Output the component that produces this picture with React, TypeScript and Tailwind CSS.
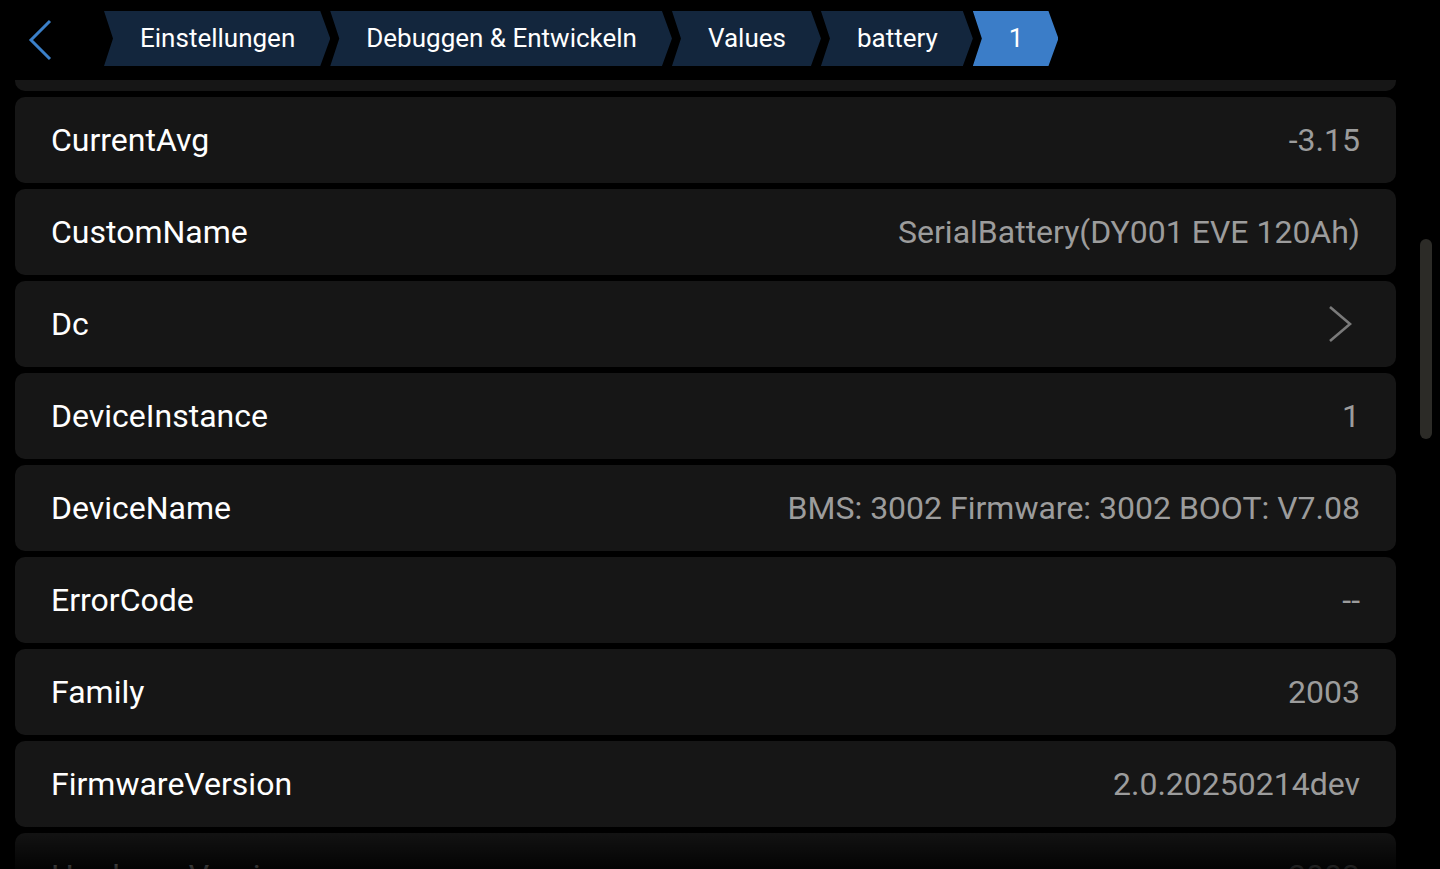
import { ReactNode } from "react";

const crumbs = ["Einstellungen", "Debuggen & Entwickeln", "Values", "battery", "1"];

const rows: { label: string; value?: string; chevron?: boolean }[] = [
  { label: "Current", value: "-3.15" },
  { label: "CurrentAvg", value: "-3.15" },
  { label: "CustomName", value: "SerialBattery(DY001 EVE 120Ah)" },
  { label: "Dc", chevron: true },
  { label: "DeviceInstance", value: "1" },
  { label: "DeviceName", value: "BMS: 3002 Firmware: 3002 BOOT: V7.08" },
  { label: "ErrorCode", value: "--" },
  { label: "Family", value: "2003" },
  { label: "FirmwareVersion", value: "2.0.20250214dev" },
  { label: "HardwareVersion", value: "2003" },
];

function Crumb({ children, active }: { children: ReactNode; active?: boolean }) {
  return (
    <div
      className={`h-[55px] flex items-center pl-[36px] pr-[35px] text-[26px] text-white ${
        active ? "bg-[#3b7dc8]" : "bg-[#13263d]"
      } [clip-path:polygon(0_0,calc(100%-10px)_0,100%_50%,calc(100%-10px)_100%,0_100%,9px_50%)]`}
    >
      {children}
    </div>
  );
}

function Row({ label, value, chevron }: { label: string; value?: string; chevron?: boolean }) {
  return (
    <div className="h-[86px] shrink-0 rounded-[10px] bg-[#161616] flex items-center justify-between pl-[36px] pr-[36px]">
      <span className="text-[32px] text-white">{label}</span>
      {chevron ? (
        <svg width="26" height="42" viewBox="0 0 26 42" className="mr-[6px]">
          <path d="M2 4 L22 21 L2 38" fill="none" stroke="#7a7a7a" strokeWidth="2.6" />
        </svg>
      ) : (
        <span className="text-[32px] text-[#9c9c9c]">{value}</span>
      )}
    </div>
  );
}

export default function App() {
  return (
    <div className="relative w-[1440px] h-[869px] bg-black overflow-hidden font-['Roboto',sans-serif]">
      {/* header */}
      <div className="h-[80px] flex items-center">
        <div className="w-[104px] h-full flex items-center pl-[27px]">
          <svg width="28" height="44" viewBox="0 0 28 44">
            <path d="M23 3 L4 22 L23 41" fill="none" stroke="#3b80c9" strokeWidth="3" />
          </svg>
        </div>
        <div className="flex items-center -mt-[3px]">
          {crumbs.map((c, i) => (
            <Crumb key={c} active={i === crumbs.length - 1}>
              {c}
            </Crumb>
          ))}
        </div>
      </div>

      {/* list */}
      <div className="h-[789px] overflow-hidden pl-[15px]">
        <div className="w-[1381px] flex flex-col gap-[6px] -mt-[75px]">
          {rows.map((r) => (
            <Row key={r.label} {...r} />
          ))}
        </div>
      </div>

      {/* scroll indicator */}
      <div className="absolute left-[1420px] top-[239px] w-[12px] h-[200px] rounded-full bg-[#2c2b27]" />

      {/* bottom fade */}
      <div className="absolute left-0 right-0 bottom-0 h-[44px] bg-gradient-to-b from-transparent to-black/85" />
    </div>
  );
}
